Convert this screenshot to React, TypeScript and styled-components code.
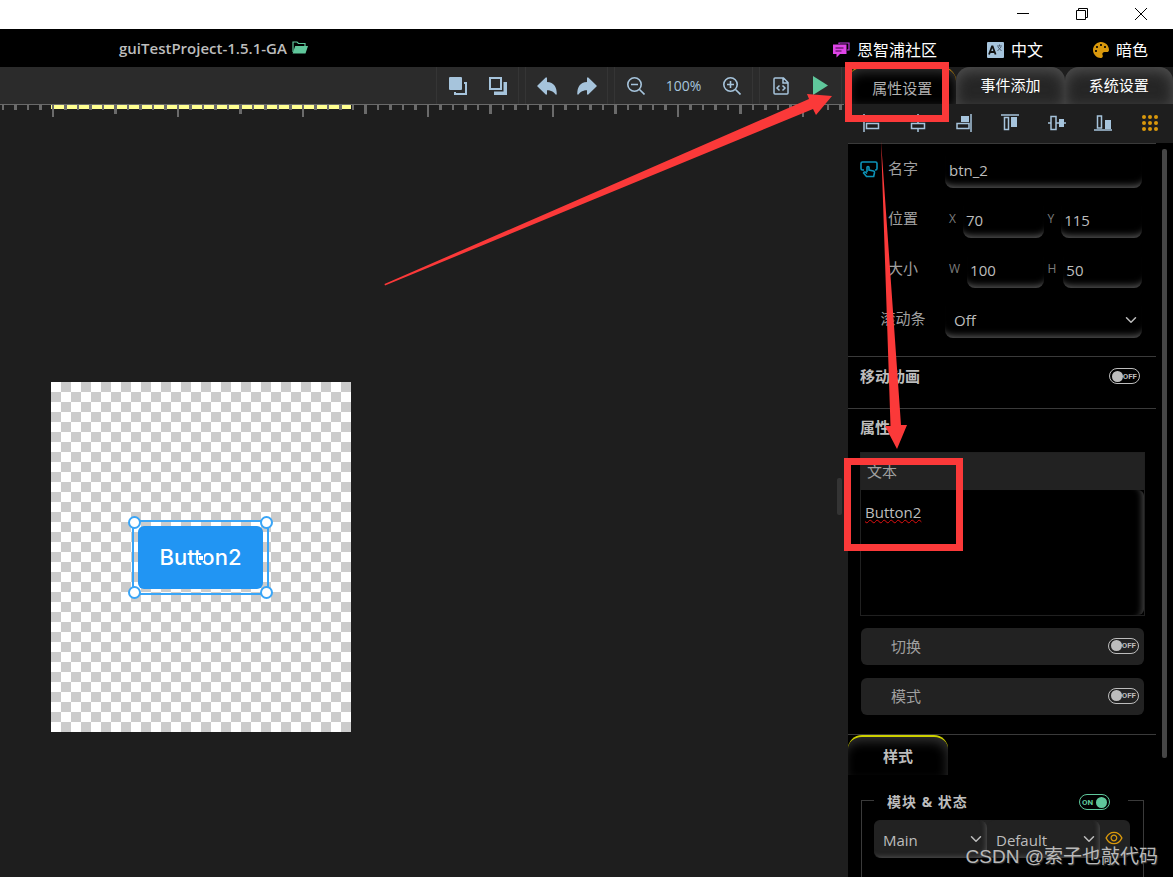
import React, { useState } from "react";
import styled, { createGlobalStyle, css } from "styled-components";
import { ChevronDown } from "lucide-react";
import { IoArrowUndo, IoArrowRedo } from "react-icons/io5";
import { FaPalette } from "react-icons/fa";
import { AiOutlineEye } from "react-icons/ai";

const c = {
  text: "#bdbdbd",
  muted: "#a0a0a0",
  dim: "#7d7d7d",
  icon: "#a6c4dc",
  green: "#5fc79b",
  gold: "#d9980c",
  red: "#fb3939",
  blue: "#2195f3",
  line: "#3a3a3a",
  card: "#222222",
};

const GlobalStyle = createGlobalStyle`
  * { box-sizing: border-box; }
  body {
    margin: 0;
    background: #1e1e1e;
    font-family: "Open Sans", "Noto Sans CJK SC", sans-serif;
    font-size: 15px;
    line-height: 20px;
    color: ${c.text};
  }
  button, input, select, textarea { font: inherit; color: inherit; }
  button { border: 0; padding: 0; background: none; cursor: pointer; }
  a { color: inherit; text-decoration: none; }
  svg { display: block; flex: none; }
`;

const Page = styled.div`
  position: relative;
  display: flex;
  flex-direction: column;
  height: 100vh;
  overflow: hidden;
`;

/* ---------- window and header bars ---------- */

const TitleBar = styled.div`
  flex: none;
  display: flex;
  justify-content: flex-end;
  height: 29px;
  padding: 0 3px 2px 0;
  background: #fff;
`;

const WindowButton = styled.button`
  display: flex;
  align-items: center;
  justify-content: center;
  width: 59px;
`;

const Header = styled.header`
  flex: none;
  display: flex;
  align-items: center;
  justify-content: space-between;
  height: 38px;
  padding: 0 25px 0 119px;
  background: #000;
`;

const ProjectName = styled.h1`
  display: flex;
  align-items: center;
  gap: 5px;
  margin: 0;
  padding-bottom: 1px;
  font-size: 15px;
  line-height: 20px;
  font-weight: 600;
`;

const HeaderNav = styled.nav`
  display: flex;
  gap: 50px;
  padding-top: 4px;
  font-size: 16px;
  color: #fff;
`;

const HeaderLink = styled.a`
  display: flex;
  align-items: center;
  gap: 7px;
`;

/* ---------- editor side ---------- */

const Body = styled.div`
  flex: 1;
  display: flex;
  min-height: 0;
`;

const Editor = styled.main`
  position: relative;
  flex: 1;
  display: flex;
  flex-direction: column;
  min-width: 0;
`;

const Toolbar = styled.div`
  flex: none;
  display: flex;
  justify-content: flex-end;
  gap: 6px;
  height: 37px;
  padding-right: 6px;
  background: #2b2b2b;
`;

const ToolGroup = styled.div<{ $wide?: boolean }>`
  display: flex;
  align-items: center;
  justify-content: center;
  width: ${(p) => (p.$wide ? 139 : 83)}px;
  border: solid #353535;
  border-width: 0 1px;
`;

const ToolButton = styled.button<{ $green?: boolean }>`
  display: flex;
  align-items: center;
  justify-content: center;
  width: 40px;
  height: 36px;
  color: ${(p) => (p.$green ? c.green : c.icon)};
`;

const ZoomValue = styled.output`
  width: 56px;
  text-align: center;
  font-size: 14px;
  color: ${c.icon};
`;

const RulerDrawing = styled.svg`
  width: calc(100% - 4px);
  height: 14px;
`;

const Canvas = styled.div`
  flex: 1;
  padding: 264px 0 0 51px;
`;

const Artboard = styled.div`
  position: relative;
  width: 300px;
  height: 350px;
  background: conic-gradient(#ccc 25%, #fff 0 50%, #ccc 0 75%, #fff 0) 0 0 / 20px 20px;
`;

const Selection = styled.div`
  position: absolute;
  left: 81px;
  top: 138px;
  padding: 4px;
  border: 2px solid #39a5f7;
`;

const WidgetButton = styled.button`
  display: block;
  width: 125px;
  height: 63px;
  padding-bottom: 2px;
  border-radius: 6px;
  background: ${c.blue};
  color: #fff;
  font-family: Inter, "Open Sans", sans-serif;
  font-size: 22px;
  font-weight: 500;
`;

const Handle = styled.i<{ $x: "left" | "right"; $y: "top" | "bottom" }>`
  position: absolute;
  ${(p) => p.$x}: -6px;
  ${(p) => p.$y}: -6px;
  width: 13px;
  height: 13px;
  border: 2px solid #39a5f7;
  border-radius: 50%;
  background: #fff;
`;

const CenterMark = styled.i`
  position: absolute;
  left: 64px;
  top: 33px;
  width: 6px;
  height: 6px;
  border: 1px solid ${c.blue};
  background: #fff;
`;

const Splitter = styled.div`
  position: absolute;
  right: 6px;
  top: 411px;
  width: 5px;
  height: 37px;
  border-radius: 2px;
  background: #343434;
`;

/* ---------- property side ---------- */

const Panel = styled.aside`
  flex: none;
  display: flex;
  flex-direction: column;
  width: 325px;
  min-height: 0;
`;

const Tabs = styled.div`
  flex: none;
  display: flex;
  height: 37px;
  background: #1e1e1e;
`;

const Tab = styled.button<{ $active?: boolean }>`
  flex: 1;
  padding-bottom: 2px;
  border-radius: 14px 14px 0 0;
  color: #fff;
  background: #262626;
  box-shadow: inset 0 4px 14px #505050;
  ${(p) =>
    p.$active &&
    css`
      padding: 3px 0 0;
      border-top: 1px solid ${c.gold};
      color: #b0b0b0;
      background: #000;
      box-shadow: inset 0 4px 12px #333;
    `}
`;

const AlignBar = styled.div`
  flex: none;
  display: flex;
  align-items: center;
  height: 39px;
  padding-bottom: 1px;
`;

const AlignButton = styled.button`
  flex: 1;
  display: flex;
  justify-content: center;
  color: ${c.icon};
`;

const Scroller = styled.div`
  flex: 1;
  display: flex;
  min-height: 0;
  background: #000;
`;

const Props = styled.div`
  flex: 1;
  min-width: 0;
  overflow: hidden;
`;

const ScrollTrack = styled.div`
  width: 17px;
  padding: 6px 6px 0;
`;

const ScrollThumb = styled.div`
  width: 5px;
  height: 609px;
  border-radius: 2px;
  background: #464646;
`;

const Section = styled.section<{ $pad?: string }>`
  border-top: 1px solid ${c.line};
  padding: ${(p) => p.$pad ?? "0"};
`;

const Row = styled.div`
  display: flex;
  align-items: center;
  height: 50px;
`;

const RowIcon = styled.span`
  width: 18px;
  margin-left: 12px;
  color: #0d93b8;
`;

const RowLabel = styled.label`
  width: 50px;
  padding-bottom: 2px;
  text-align: center;
  white-space: nowrap;
  color: ${c.muted};
`;

const RowFields = styled.div`
  flex: 1;
  display: flex;
  margin: 0 14px 0 17px;
`;

const Pair = styled.div`
  flex: 1;
  display: flex;
  min-width: 0;
  gap: 7px;
`;

const PairLabel = styled.label`
  padding: 8px 0 0 4px;
  font-size: 12px;
  color: ${c.dim};
`;

const well = css`
  width: 100%;
  min-width: 0;
  height: 37px;
  border: 0;
  border-radius: 8px;
  outline: 0;
  background: #000;
  box-shadow: inset 0 -9px 7px -7px #5a5a5a;
`;

const Field = styled.input<{ $tight?: boolean }>`
  ${well}
  padding: 1px ${(p) => (p.$tight ? 3 : 4)}px 0;
`;

const SelectWrap = styled.div`
  position: relative;
  flex: 1;
  svg {
    position: absolute;
    right: 2px;
    top: 10px;
    pointer-events: none;
  }
`;

const Select = styled.select`
  ${well}
  appearance: none;
  padding: 1px 9px 0;
`;

const DarkSelect = styled(Select)`
  height: 38px;
  background: ${c.card};
  box-shadow: inset -4px -4px 5px -3px #505050;
`;

const SectionHead = styled.div`
  display: flex;
  align-items: center;
  justify-content: space-between;
  padding: 0 16px 0 12px;
  font-weight: 700;
`;

const TextBox = styled.div`
  margin: 15px 11px 0 12px;
  border: 1px solid #202020;
`;

const TextBoxLabel = styled.label`
  display: block;
  height: 37px;
  padding: 8px 6px;
  background: ${c.card};
  color: ${c.muted};
`;

const TextArea = styled.textarea`
  display: block;
  width: 100%;
  height: 125px;
  padding: 12px 4px;
  border: 0;
  border-radius: 6px;
  outline: 0;
  resize: none;
  background: #000;
  box-shadow: inset -8px 0 6px -6px #444;
  text-decoration: underline wavy #e01010 1px;
`;

const OptionRow = styled.div`
  display: flex;
  align-items: center;
  justify-content: space-between;
  height: 37px;
  margin: 12px 12px 13px 13px;
  padding: 0 5px 2px 30px;
  border-radius: 6px;
  background: ${c.card};
  color: ${c.muted};
`;

const StyleTab = styled.button`
  width: 100px;
  height: 40px;
  border-top: 2px solid #cdd000;
  border-radius: 14px 14px 0 0;
  box-shadow: inset -2px 6px 12px -2px #333;
  font-weight: 700;
`;

const Group = styled.fieldset`
  min-width: 0;
  margin: 13px 12px 0 13px;
  padding: 8px 13px 40px 12px;
  border: 1px solid ${c.line};
`;

const Legend = styled.legend`
  display: flex;
  align-items: center;
  justify-content: space-between;
  width: 254px;
  padding: 4px 18px 0 13px;
  font-size: 14px;
  font-weight: 700;
  letter-spacing: 1px;
`;

const SelectBar = styled.div`
  display: flex;
  border-radius: 6px;
  background: ${c.card};
`;

const EyeButton = styled.button`
  width: 30px;
  height: 36px;
  padding-left: 4px;
  color: ${c.gold};
`;

const SwitchBox = styled.label<{ $on: boolean }>`
  position: relative;
  display: flex;
  align-items: center;
  justify-content: space-between;
  flex-direction: ${(p) => (p.$on ? "row-reverse" : "row")};
  width: 31px;
  height: 16px;
  padding: 0 2px;
  border: 1px solid currentColor;
  border-radius: 8px;
  color: ${(p) => (p.$on ? c.green : "#bdbdbd")};
  font: 700 8px/10px Roboto, sans-serif;
  letter-spacing: 0;
  cursor: pointer;
  input {
    appearance: none;
    width: 11px;
    height: 11px;
    margin: 0;
    border-radius: 50%;
    background: currentColor;
  }
`;

const SwitchText = styled.span`
  padding-top: 1px;
`;

/* ---------- markup drawn over the page ---------- */

const Markup = styled.svg`
  position: absolute;
  right: 0;
  top: 0;
  pointer-events: none;
`;

const Watermark = styled.div`
  position: absolute;
  right: 15px;
  bottom: 6px;
  font-family: "Liberation Sans", "Noto Sans CJK SC", sans-serif;
  font-size: 19px;
  line-height: 28px;
  color: #b9b9b9;
  text-shadow: 1px 1px 1px #333;
`;

/* ---------- icons ---------- */

const FolderIcon = () => (
  <svg width="16" height="13" viewBox="0 0 16 13">
    <path d="M1 11V1h4l1.500 1.500H13V5" fill="none" stroke={c.green} strokeWidth="1.200" />
    <path d="M3.200 5H16l-2.500 7.500H.6z" fill={c.green} />
  </svg>
);

const ChatIcon = () => (
  <svg width="18" height="16" viewBox="0 0 18 16">
    <path d="M7 2V1h10v7h-2" fill="none" stroke="#c03be0" strokeWidth="1.200" />
    <path d="M1 2.500h13.500v9.500H8l-3.500 3.500V12H1z" fill="#e045e8" />
    <path d="M3.500 6h8M3.500 9h6" stroke="#3a0840" strokeWidth="1.200" />
  </svg>
);

const TranslateIcon = () => (
  <svg width="17" height="16" viewBox="0 0 17 16">
    <rect width="17" height="16" rx="1" fill={c.icon} />
    <path d="M2 12.500 5 4.500h.6l3 8M3.200 10h4.300" fill="none" stroke="#111" strokeWidth="1.800" />
    <path d="M10 4h5M12.500 2.500V4M11 5l3.500 4M14 5l-3.500 4" fill="none" stroke="#456" strokeWidth="0.900" />
  </svg>
);

const FrontIcon = () => (
  <svg width="18" height="18" viewBox="0 0 18 18">
    <rect width="13" height="13" rx="1" fill="currentColor" />
    <path d="M15 6h2v11H6v-2" fill="none" stroke="currentColor" strokeWidth="2" />
  </svg>
);

const BackIcon = () => (
  <svg width="18" height="18" viewBox="0 0 18 18">
    <rect x="1" y="1" width="11" height="11" fill="none" stroke="currentColor" strokeWidth="2" />
    <path d="M14.500 5H18v13H5v-3.500h9.500z" fill="currentColor" />
  </svg>
);

const ZoomIcon = ({ plus }: { plus?: boolean }) => (
  <svg width="18" height="18" viewBox="0 0 18 18" fill="none" stroke="currentColor" strokeWidth="1.600">
    <circle cx="7.500" cy="7.500" r="6.700" />
    <path d={plus ? "M4 7.500h7M7.500 4v7M12.500 12.500l5 5" : "M4 7.500h7M12.500 12.500l5 5"} />
  </svg>
);

const CodeFileIcon = () => (
  <svg width="16" height="18" viewBox="0 0 16 18" fill="none" stroke="currentColor" strokeWidth="1.500">
    <path d="M1 2Q1 1 2 1h8.500L15 5.500V16q0 1-1 1H2q-1 0-1-1zM10 1v5h5" />
    <path d="M6.500 8.500 4 11l2.500 2.500M9.500 8.500 12 11l-2.500 2.500" />
  </svg>
);

const PlayIcon = () => (
  <svg width="15" height="19" viewBox="0 0 15 19">
    <path d="M0 0 15 9.500 0 19z" fill="currentColor" />
  </svg>
);

const PointerIcon = () => (
  <svg width="18" height="17" viewBox="0 0 18 17" fill="none" stroke="currentColor" strokeWidth="1.600">
    <path d="M4 9H2.500Q1 9 1 7.500v-5Q1 1 2.500 1h13Q17 1 17 2.500v5Q17 9 15.500 9H15" />
    <path d="M7 11V6.500q0-1 1-1t1 1V9l4.500 1q1.200.3 1 1.500l-.8 4H6.500L3.500 12q.8-1.600 2-.8L7 12.500" />
  </svg>
);

const alignShapes: [string, React.ReactNode][] = [
  ["左对齐", <><path d="M2 0v18M4.500 9.500h12v5h-12z" /><path d="M4 2h9v6H4z" fill="currentColor" stroke="none" /></>],
  ["水平居中", <><path d="M9 0v9M9 15v3M2.500 9.500h13v5h-13z" /><path d="M5 2h8v5H5z" fill="currentColor" stroke="none" /></>],
  ["右对齐", <><path d="M16 0v18M2 9.500h12v5H2z" /><path d="M6 2h8v6H6z" fill="currentColor" stroke="none" /></>],
  ["顶对齐", <><path d="M0 1h18M3.500 3.500h4v12h-4z" /><path d="M10 3h6v10h-6z" fill="currentColor" stroke="none" /></>],
  ["垂直居中", <><path d="M0 9h3M8 9h10M3 2.500h5v13H3z" /><path d="M11 5h5v8h-5z" fill="currentColor" stroke="none" /></>],
  ["底对齐", <><path d="M0 16h18M3.500 2h4v12h-4z" /><path d="M11 6h6v9h-6z" fill="currentColor" stroke="none" /></>],
];

const AlignIcon = ({ children }: { children: React.ReactNode }) => (
  <svg width="18" height="18" viewBox="0 0 18 18" fill="none" stroke="currentColor" strokeWidth="1.500">
    {children}
  </svg>
);

const GridIcon = () => (
  <svg width="16" height="16" viewBox="0 0 16 16" fill={c.gold}>
    {[2, 8, 14].flatMap((y) => [2, 8, 14].map((x) => <circle key={`${x}-${y}`} cx={x} cy={y} r="2" />))}
  </svg>
);

const tickOffsets = [0, 12, 25, 37, 50, 62, 75, 87, 100, 112];

const Ruler = () => (
  <RulerDrawing aria-hidden="true">
    <defs>
      <pattern id="ticks" x="52" y="0" width="125" height="14" patternUnits="userSpaceOnUse">
        {tickOffsets.map((x, i) => (
          <rect key={x} x={x} y="1" width={i % 2 ? 3 : 2} height={i === 0 ? 12 : i === 5 ? 9 : 5} fill="#6a6a6a" />
        ))}
      </pattern>
    </defs>
    <rect x="51" y="1" width="300" height="4" fill="#ffff90" />
    <rect width="100%" height="14" fill="url(#ticks)" />
    <rect width="100%" height="1" fill="#6a6a6a" />
  </RulerDrawing>
);

/* ---------- small controls ---------- */

const Switch = ({ label, initial = false }: { label: string; initial?: boolean }) => {
  const [on, setOn] = useState(initial);
  return (
    <SwitchBox $on={on}>
      <input type="checkbox" aria-label={label} checked={on} onChange={() => setOn(!on)} />
      <SwitchText>{on ? "ON" : "OFF"}</SwitchText>
    </SwitchBox>
  );
};

const NumberPair = ({ name, value }: { name: string; value: string }) => (
  <Pair>
    <PairLabel htmlFor={`field-${name}`}>{name}</PairLabel>
    <Field id={`field-${name}`} $tight defaultValue={value} />
  </Pair>
);

export default function App() {
  return (
    <Page>
      <GlobalStyle />
      <TitleBar>
        <WindowButton aria-label="Minimize">
          <svg width="12" height="12" viewBox="0 0 12 12"><path d="M0 5.500h12" stroke="#000" /></svg>
        </WindowButton>
        <WindowButton aria-label="Restore">
          <svg width="12" height="12" viewBox="0 0 12 12" fill="none" stroke="#000">
            <path d="M.5 2.500h9v9h-9zM2.500 2.500v-2h9v9h-2" />
          </svg>
        </WindowButton>
        <WindowButton aria-label="Close">
          <svg width="12" height="12" viewBox="0 0 12 12"><path d="M0 0l12 12M12 0 0 12" stroke="#000" /></svg>
        </WindowButton>
      </TitleBar>

      <Header>
        <ProjectName>guiTestProject-1.5.1-GA <FolderIcon /></ProjectName>
        <HeaderNav>
          <HeaderLink href="#community"><ChatIcon />恩智浦社区</HeaderLink>
          <HeaderLink href="#language"><TranslateIcon />中文</HeaderLink>
          <HeaderLink href="#theme"><FaPalette size={16} color={c.gold} />暗色</HeaderLink>
        </HeaderNav>
      </Header>

      <Body>
        <Editor>
          <Toolbar>
            <ToolGroup>
              <ToolButton aria-label="Bring to front"><FrontIcon /></ToolButton>
              <ToolButton aria-label="Send to back"><BackIcon /></ToolButton>
            </ToolGroup>
            <ToolGroup>
              <ToolButton aria-label="Undo"><IoArrowUndo size={24} /></ToolButton>
              <ToolButton aria-label="Redo"><IoArrowRedo size={24} /></ToolButton>
            </ToolGroup>
            <ToolGroup $wide>
              <ToolButton aria-label="Zoom out"><ZoomIcon /></ToolButton>
              <ZoomValue>100%</ZoomValue>
              <ToolButton aria-label="Zoom in"><ZoomIcon plus /></ToolButton>
            </ToolGroup>
            <ToolGroup>
              <ToolButton aria-label="Generate code"><CodeFileIcon /></ToolButton>
              <ToolButton aria-label="Run" $green><PlayIcon /></ToolButton>
            </ToolGroup>
          </Toolbar>
          <Ruler />
          <Canvas>
            <Artboard>
              <Selection>
                <WidgetButton>Button2</WidgetButton>
                <CenterMark />
                <Handle $x="left" $y="top" />
                <Handle $x="right" $y="top" />
                <Handle $x="left" $y="bottom" />
                <Handle $x="right" $y="bottom" />
              </Selection>
            </Artboard>
          </Canvas>
          <Splitter />
        </Editor>

        <Panel>
          <Tabs>
            <Tab $active>属性设置</Tab>
            <Tab>事件添加</Tab>
            <Tab>系统设置</Tab>
          </Tabs>
          <AlignBar>
            {alignShapes.map(([label, shape]) => (
              <AlignButton key={label} aria-label={label}><AlignIcon>{shape}</AlignIcon></AlignButton>
            ))}
            <AlignButton aria-label="网格"><GridIcon /></AlignButton>
          </AlignBar>
          <Scroller>
            <Props>
              <Section $pad="0 0 12px">
                <Row>
                  <RowIcon><PointerIcon /></RowIcon>
                  <RowLabel htmlFor="name">名字</RowLabel>
                  <RowFields><Field id="name" defaultValue="btn_2" /></RowFields>
                </Row>
                <Row>
                  <RowIcon />
                  <RowLabel as="span">位置</RowLabel>
                  <RowFields>
                    <NumberPair name="X" value="70" />
                    <NumberPair name="Y" value="115" />
                  </RowFields>
                </Row>
                <Row>
                  <RowIcon />
                  <RowLabel as="span">大小</RowLabel>
                  <RowFields>
                    <NumberPair name="W" value="100" />
                    <NumberPair name="H" value="50" />
                  </RowFields>
                </Row>
                <Row>
                  <RowIcon />
                  <RowLabel htmlFor="scrollbar">滚动条</RowLabel>
                  <RowFields>
                    <SelectWrap>
                      <Select id="scrollbar" defaultValue="Off">
                        <option>Off</option>
                        <option>On</option>
                      </Select>
                      <ChevronDown size={18} />
                    </SelectWrap>
                  </RowFields>
                </Row>
              </Section>
              <Section $pad="9px 0 22px">
                <SectionHead>移动动画<Switch label="移动动画" /></SectionHead>
              </Section>
              <Section $pad="8px 0 6px">
                <SectionHead>属性</SectionHead>
                <TextBox>
                  <TextBoxLabel htmlFor="text">文本</TextBoxLabel>
                  <TextArea id="text" spellCheck={false} defaultValue="Button2" />
                </TextBox>
                <OptionRow>切换<Switch label="切换" /></OptionRow>
                <OptionRow>模式<Switch label="模式" /></OptionRow>
              </Section>
              <Section>
                <StyleTab>样式</StyleTab>
                <Group>
                  <Legend>模块 &amp; 状态<Switch label="模块 & 状态" initial /></Legend>
                  <SelectBar>
                    <SelectWrap>
                      <DarkSelect aria-label="模块" defaultValue="Main">
                        <option>Main</option>
                      </DarkSelect>
                      <ChevronDown size={18} />
                    </SelectWrap>
                    <SelectWrap>
                      <DarkSelect aria-label="状态" defaultValue="Default">
                        <option>Default</option>
                      </DarkSelect>
                      <ChevronDown size={18} />
                    </SelectWrap>
                    <EyeButton aria-label="预览"><AiOutlineEye size={20} /></EyeButton>
                  </SelectBar>
                </Group>
              </Section>
            </Props>
            <ScrollTrack><ScrollThumb /></ScrollTrack>
          </Scroller>
        </Panel>
      </Body>

      <Markup width="789" height="560" viewBox="384 0 789 560" fill={c.red} aria-hidden="true">
        <path d="M384.500 284 809 99l-2-5 25 2-16 19-3-6L385 285.500z" />
        <path d="M881 141l9.500 285h-5.500l12 23 10-24h-6z" />
        <path d="M848.500 65.500h97v53h-97zM847.500 461.500h112v86h-112z" fill="none" stroke={c.red} strokeWidth="7" />
      </Markup>
      <Watermark>CSDN @索子也敲代码</Watermark>
    </Page>
  );
}
